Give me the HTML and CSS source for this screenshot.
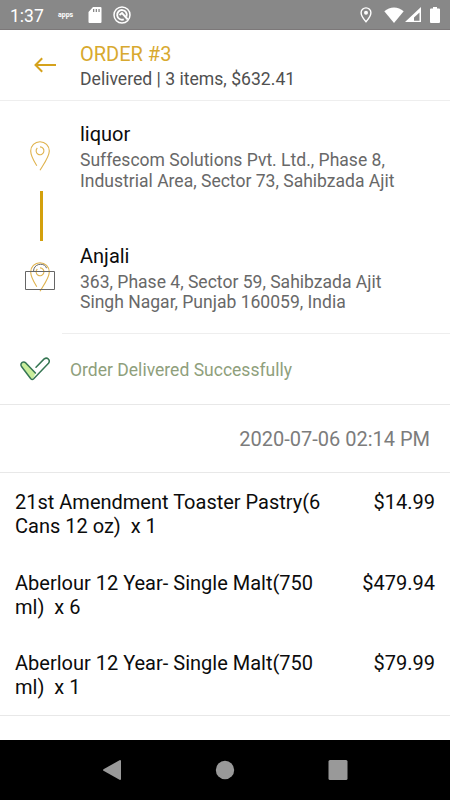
FILE: index.html
```html
<!DOCTYPE html>
<html lang="en">
<head>
<meta charset="utf-8">
<title>Order #3</title>
<link rel="stylesheet" href="styles.css">
</head>
<body>
<div class="statusbar">
  <span class="clock">1:37</span>
  <span class="apps">apps</span>
  <svg class="sd" width="14" height="16" viewBox="0 0 14 16"><path fill="#fff" fill-rule="evenodd" d="M5 0h7.5A1 1 0 0 1 13.500 1v14a1 1 0 0 1-1 1h-11a1 1 0 0 1-1-1V5zM5 2v3h1.300V2zM7.700 2v3H9V2zM10.400 2v3h1.300V2z"/></svg>
  <svg class="q" width="18" height="18" viewBox="0 0 18 18" fill="none" stroke="#fff"><circle cx="9" cy="9" r="8" stroke-width="1.500"/><path d="M10.800 13.300A4.800 4.800 0 1 1 13.500 10.500M6.500 9l2.500-2 5.800 6.500" stroke-width="1.900"/></svg>
  <svg class="loc" width="12" height="16" viewBox="0 0 12 16"><path d="M6 .9a4.900 4.900 0 0 0-4.900 4.900C1.100 9.200 6 14.800 6 14.800s4.900-5.600 4.900-9A4.900 4.900 0 0 0 6 .9z" fill="none" stroke="#fff" stroke-width="1.400"/><circle cx="6" cy="5.800" r="2" fill="#fff"/></svg>
  <svg class="wifi" width="20" height="16" viewBox="0 0 20 16"><path fill="#fff" d="M.3 4.200C5.800-.9 14.200-.9 19.700 4.200L10 16z"/></svg>
  <svg class="cell" width="16" height="15" viewBox="0 0 16 15"><path fill="#fff" fill-rule="evenodd" d="M16 0v15H0zM14.500 5.500L9 10.500v3.300h5.500z"/></svg>
  <svg class="battery" width="10" height="16" viewBox="0 0 10 16"><path fill="#fff" d="M3 0h4v1.600h2a1 1 0 0 1 1 1V15a1 1 0 0 1-1 1H1a1 1 0 0 1-1-1V2.600a1 1 0 0 1 1-1h2z"/></svg>
</div>

<header class="header">
  <svg class="back" width="22" height="16" viewBox="0 0 22 16" fill="none" stroke="#d5a21c" stroke-width="2"><path d="M22 8H1.500M8.200 1.200L1.500 8l6.700 6.800"/></svg>
  <div>
    <h1 class="title">ORDER #3</h1>
    <p class="summary">Delivered | 3 items, $632.41</p>
  </div>
</header>

<section class="route">
  <div class="track">
    <svg class="pin" width="20" height="30" viewBox="0 0 20 30" fill="none" stroke="#dfb24c" stroke-width="1.100"><path d="M6.800 24.800C3.500 19.500.7 14.700.7 10a9.300 9.300 0 0 1 18.600 0C19.300 15.500 14.500 22 10 29.300"/><path d="M7.300 7A3.900 3.900 0 1 0 10 5.900"/></svg>
    <span class="line"></span>
    <svg class="pin-home" width="30" height="30" viewBox="0 0 30 30" fill="none"><path d="M11.800 24.800C8.500 19.500 5.700 14.700 5.700 10a9.300 9.300 0 0 1 18.600 0C24.300 15.500 19.500 22 15 29.300M12.300 7A3.900 3.900 0 1 0 15 5.900" stroke="#dfb24c" stroke-width="1.100"/><path d="M.5 9.500h29v18H.5zM8.500 9.500c0-9 12-9 13-3.300" stroke="#666" stroke-width="1"/></svg>
  </div>
  <div class="stops">
    <div class="stop">
      <h2 class="name">liquor</h2>
      <p class="address">Suffescom Solutions Pvt. Ltd., Phase 8,<br>Industrial Area, Sector 73, Sahibzada Ajit</p>
    </div>
    <div class="stop">
      <h2 class="name">Anjali</h2>
      <p class="address">363, Phase 4, Sector 59, Sahibzada Ajit<br>Singh Nagar, Punjab 160059, India</p>
    </div>
  </div>
</section>

<section class="status">
  <svg width="30" height="24" viewBox="0 0 30 24" stroke="#367653" stroke-width="1.500" stroke-linejoin="round" stroke-linecap="round"><path fill="#c9ee9b" stroke="none" d="M2 9.500L1.200 7.500 3.400 5.400l2.400.5L15.500 16l-2.200 5.300-2 .6z"/><path fill="none" d="M16 10.200l8.200-8.300c3-2.200 6.500 1.200 4.300 4.300L13.700 21.700c-.9.900-2 .9-2.900 0L1.500 9.500C-.2 6.500 3 3.500 5.800 5.900L15.400 16"/></svg>
  <span class="status-text">Order Delivered Successfully</span>
</section>

<section class="date">2020-07-06 02:14 PM</section>

<ul class="items">
  <li class="item"><span>21st Amendment Toaster Pastry(6<br>Cans 12 oz)&nbsp; x 1</span><span>$14.99</span></li>
  <li class="item"><span>Aberlour 12 Year- Single Malt(750<br>ml)&nbsp; x 6</span><span>$479.94</span></li>
  <li class="item"><span>Aberlour 12 Year- Single Malt(750<br>ml)&nbsp; x 1</span><span>$79.99</span></li>
</ul>

<nav class="navbar">
  <svg width="20" height="20" viewBox="0 0 20 20"><path fill="#999" d="M18 0q1 0 1 1v18q0 1-1 1L1.500 10.800q-1-.8 0-1.600z"/></svg>
  <svg width="20" height="20" viewBox="0 0 20 20"><circle cx="10" cy="10" r="9.200" fill="#999"/></svg>
  <svg width="20" height="20" viewBox="0 0 20 20"><rect x=".5" width="19" height="20" rx="1.500" fill="#999"/></svg>
</nav>
</body>
</html>
```
FILE: styles.css
```css
* { box-sizing: border-box; margin: 0; padding: 0; }

body {
  width: 450px;
  height: 800px;
  display: flex;
  flex-direction: column;
  overflow: hidden;
  background: #fff;
  color: #0c0c0c;
  font-family: Roboto, sans-serif;
  font-weight: 400;
}

svg { display: block; flex: none; }

.statusbar {
  height: 30px;
  display: flex;
  align-items: center;
  padding: 0 10px;
  background: #888;
  border-bottom: 1px solid #7c7879;
  color: #fff;
}
.clock { width: 48px; font-size: 17.5px; line-height: 30px; padding-top: 2px; }
.apps { width: 30px; font-size: 7px; font-weight: 700; line-height: 10px; padding-top: 1px; }
.q { margin-left: 11px; }
.loc { margin-left: auto; }
.wifi { margin-left: 12px; }
.cell { margin-left: 1px; }
.battery { margin-left: 9px; }

.header {
  height: 71px;
  display: flex;
  align-items: flex-start;
  padding: 12px 0 0 34px;
  border-bottom: 1px solid #eee;
}
.back { margin: 15px 24px 0 0; }
.title { font-size: 20px; line-height: 24px; font-weight: 400; color: #d8a92f; }
.summary { margin-top: 3px; font-size: 17.6px; line-height: 21px; color: #505050; }

.route { height: 232px; display: flex; }
.track {
  width: 80px;
  display: flex;
  flex-direction: column;
  align-items: center;
  padding-top: 40px;
}
.line { width: 3px; height: 50px; margin: 20px 0 21px 2px; background: #d3a00c; }
.stops { flex: 1; padding-top: 21px; }
.stop { height: 121.5px; }
.name { font-size: 20px; line-height: 24px; font-weight: 400; }
.address { margin-top: 4px; font-size: 17.55px; line-height: 20.5px; color: #686868; }

.status {
  height: 72px;
  display: flex;
  align-items: center;
  gap: 20px;
  padding-left: 20px;
  border-bottom: 1px solid #e8e8e8;
  background: linear-gradient(#eee, #eee) 62px 0 / 388px 1px no-repeat;
  font-size: 17.55px;
  color: #8f9f7c;
}
.status-text { padding-top: 2px; }

.date {
  height: 68px;
  padding-right: 20px;
  border-bottom: 1px solid #e8e8e8;
  font-size: 20px;
  line-height: 69px;
  text-align: right;
  color: #7c7c7c;
}

.items { height: 243px; padding: 17.4px 15px 0; border-bottom: 1px solid #e8e8e8; list-style: none; }
.item {
  height: 80.5px;
  display: flex;
  justify-content: space-between;
  font-size: 20px;
  line-height: 24px;
}

.navbar {
  height: 60px;
  margin-top: auto;
  display: flex;
  align-items: center;
  justify-content: center;
  gap: 93px;
  background: #000;
}
```
